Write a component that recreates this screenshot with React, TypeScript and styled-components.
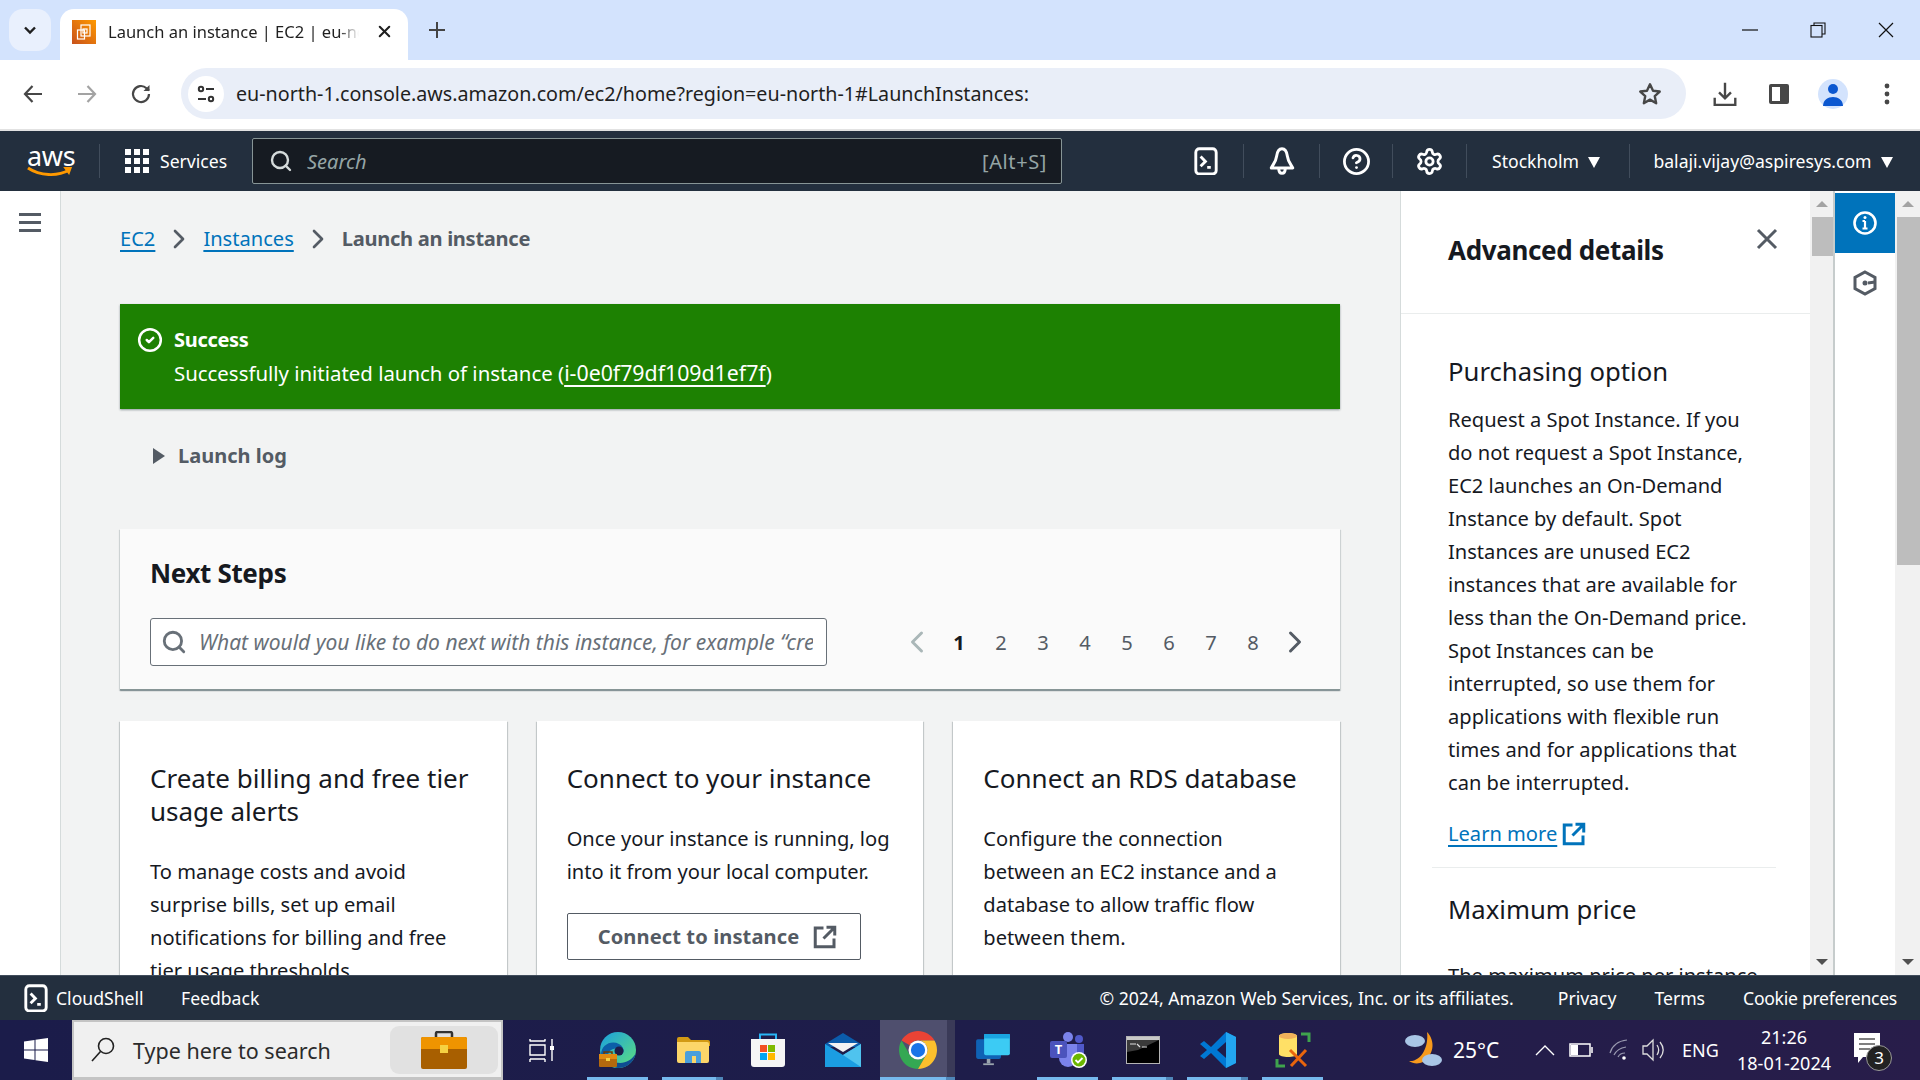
import React from "react";
import styled, { createGlobalStyle } from "styled-components";
import { ChevronLeft, ChevronRight, CircleCheck, CircleHelp, Search, Settings, X } from "lucide-react";

const FONT = `"Noto Sans", "Open Sans", sans-serif`;

const GlobalStyle = createGlobalStyle`
  html, body { margin: 0; padding: 0; background: #f2f3f3; }
  * { box-sizing: border-box; }
`;

const Screen = styled.div`
  width: 1920px;
  height: 1080px;
  display: flex;
  flex-direction: column;
  overflow: hidden;
  font-family: ${FONT};
  color: #16191f;
`;

/* browser chrome */
const TabStrip = styled.div`
  height: 60px;
  flex: none;
  display: flex;
  background: #d3e3fd;
  padding: 9px 0 0 9px;
`;
const TabSearch = styled.div`
  width: 42px;
  height: 42px;
  border-radius: 14px;
  background: #e9f0fd;
  display: flex;
  align-items: center;
  justify-content: center;
`;
const Tab = styled.div`
  width: 348px;
  height: 51px;
  margin-left: 9px;
  background: #fff;
  border-radius: 14px 14px 0 0;
  display: flex;
  align-items: center;
  padding: 0 12px 6px 12px;
`;
const Favicon = styled.div`
  width: 24px;
  height: 24px;
  flex: none;
  background: linear-gradient(45deg, #c8511b, #ff9900);
  display: flex;
  align-items: center;
  justify-content: center;
`;
const TabTitle = styled.div`
  width: 251px;
  margin-left: 12px;
  font-size: 16.5px;
  white-space: nowrap;
  overflow: hidden;
  color: #1f1f1f;
  -webkit-mask-image: linear-gradient(90deg, #000 92%, transparent);
  mask-image: linear-gradient(90deg, #000 92%, transparent);
`;
const TabClose = styled.div`
  margin-left: 16px;
  display: flex;
`;
const NewTab = styled.div`
  width: 42px;
  display: flex;
  align-items: center;
  justify-content: center;
  margin-left: 8px;
  padding-bottom: 9px;
`;
const WindowButtons = styled.div`
  margin-left: auto;
  display: flex;
  padding-bottom: 9px;
`;
const WinButton = styled.div`
  width: 68px;
  height: 42px;
  display: flex;
  align-items: center;
  justify-content: center;
`;
const Toolbar = styled.div`
  height: 71px;
  flex: none;
  background: #fff;
  border-bottom: 2px solid #e2e2e2;
  display: flex;
  align-items: center;
  padding: 0 0 2px 6px;
`;
const ToolIcon = styled.div`
  width: 54px;
  height: 42px;
  flex: none;
  display: flex;
  align-items: center;
  justify-content: center;
`;
const AddressBar = styled.div`
  width: 1505px;
  height: 51px;
  margin-left: 13px;
  margin-right: 12px;
  border-radius: 26px;
  background: #e9eef8;
  display: flex;
  align-items: center;
  padding: 0 23px 0 7px;
  flex: none;
`;
const SiteInfo = styled.div`
  width: 36px;
  height: 36px;
  border-radius: 50%;
  background: #fff;
  display: flex;
  align-items: center;
  justify-content: center;
  flex: none;
`;
const Url = styled.div`
  margin-left: 12px;
  font-size: 19.7px;
  color: #1f1f1f;
  flex: 1;
  white-space: nowrap;
`;
const Avatar = styled.div`
  width: 30px;
  height: 30px;
  border-radius: 50%;
  background: #d3e3fd;
  display: flex;
  align-items: center;
  justify-content: center;
`;

/* AWS nav */
const Nav = styled.div`
  height: 60px;
  flex: none;
  background: #232f3e;
  display: flex;
  align-items: center;
  color: #fff;
`;
const LogoCell = styled.div`
  width: 100px;
  height: 34px;
  border-right: 1px solid #414d5c;
  padding-left: 27px;
  display: flex;
  flex-direction: column;
  line-height: 1;
`;
const LogoText = styled.span`
  font-size: 27px;
  line-height: 24px;
  height: 22px;
  letter-spacing: -0.3px;
`;
const ServicesCell = styled.div`
  width: 152px;
  display: flex;
  align-items: center;
  padding-left: 25px;
  font-size: 17.6px;
  gap: 11px;
`;
const GridIcon = styled.div`
  display: grid;
  grid-template-columns: repeat(3, 6px);
  grid-auto-rows: 6px;
  gap: 3px;
  i {
    background: #fff;
    display: block;
  }
`;
const NavSearch = styled.div`
  width: 810px;
  height: 46px;
  background: #161b22;
  border: 1px solid #879596;
  border-radius: 2px;
  display: flex;
  align-items: center;
  padding: 0 14px 0 16px;
  color: #95a5a6;
  font-size: 20px;
`;
const NavSearchLabel = styled.span`
  font-style: italic;
  margin-left: 14px;
  flex: 1;
`;
const NavShortcut = styled.span`
  letter-spacing: 0.6px;
`;
const NavIcons = styled.div`
  margin-left: auto;
  display: flex;
  align-items: center;
`;
const NavCell = styled.div<{ $w: number; $line?: boolean }>`
  width: ${(p) => p.$w}px;
  height: 34px;
  flex: none;
  display: flex;
  align-items: center;
  justify-content: center;
  gap: 9px;
  font-size: 17.6px;
  border-left: ${(p) => (p.$line ? "1px solid #414d5c" : "none")};
`;
const NavTextCell = styled(NavCell)`
  padding-right: 4px;
`;
const Caret = styled.span`
  width: 0;
  height: 0;
  border-left: 6px solid transparent;
  border-right: 6px solid transparent;
  border-top: 11px solid #fff;
  margin-top: 2px;
`;

/* page */
const Main = styled.div`
  flex: 1;
  min-height: 0;
  display: flex;
  background: #f2f3f3;
  overflow: hidden;
`;
const SideRail = styled.div`
  width: 61px;
  flex: none;
  background: #fff;
  border-right: 1px solid #d5dbdb;
  padding: 22px 0 0 19px;
`;
const Burger = styled.div`
  width: 22px;
  display: flex;
  flex-direction: column;
  gap: 5px;
  i {
    height: 3px;
    background: #545b64;
    display: block;
  }
`;
const Content = styled.div`
  width: 1339px;
  flex: none;
  padding: 31px 60px 0 59px;
  overflow: hidden;
  font-size: 20.1px;
  line-height: 33px;
`;
const Crumbs = styled.div`
  display: flex;
  align-items: center;
  height: 33px;
`;
const Link = styled.a`
  color: #0073bb;
  text-decoration: underline;
  text-underline-offset: 4px;
`;
const CrumbSep = styled.span`
  width: 48px;
  display: flex;
  justify-content: center;
  color: #545b64;
`;
const CrumbNow = styled.span`
  color: #545b64;
  font-weight: 700;
  letter-spacing: -0.3px;
`;
const Flash = styled.div`
  margin-top: 49px;
  height: 105px;
  background: #1d8102;
  color: #fff;
  padding: 19px 0 0 17px;
  display: flex;
  gap: 11px;
  box-shadow: 0 1px 2px rgba(0, 28, 36, 0.4);
  font-size: 20.4px;
`;
const FlashIcon = styled.div`
  height: 33px;
  display: flex;
  align-items: center;
`;
const FlashTitle = styled.div`
  font-weight: 700;
  font-size: 20px;
  letter-spacing: -0.3px;
`;
const FlashLink = styled.a`
  color: #fff;
  font-size: 21.3px;
  text-decoration: underline;
  text-underline-offset: 4px;
`;
const Expander = styled.div`
  margin-top: 30px;
  padding-left: 33px;
  height: 33px;
  display: flex;
  align-items: center;
  gap: 13px;
  font-weight: 700;
  font-size: 20px;
  color: #545b64;
`;
const Triangle = styled.span`
  width: 0;
  height: 0;
  border-top: 8px solid transparent;
  border-bottom: 8px solid transparent;
  border-left: 12px solid #545b64;
`;
const NextSteps = styled.div`
  margin-top: 57px;
  height: 161px;
  background: #fafafa;
  padding: 28px 30px 0;
  border-bottom: 1px solid #879596;
  box-shadow: 0 1px 1px rgba(0, 28, 36, 0.3), 1px 1px 1px rgba(0, 28, 36, 0.1), -1px 1px 1px rgba(0, 28, 36, 0.1);
`;
const SectionTitle = styled.h2`
  margin: 0;
  font-size: 26px;
  line-height: 33px;
  font-weight: 700;
  letter-spacing: -0.35px;
`;
const StepsRow = styled.div`
  margin-top: 28px;
  display: flex;
  align-items: center;
`;
const InputWrap = styled.div`
  position: relative;
  width: 677px;
  height: 48px;
  flex: none;
  svg {
    position: absolute;
    left: 11px;
    top: 11px;
  }
`;
const StepsInput = styled.input`
  width: 100%;
  height: 100%;
  padding: 0 13px 0 48px;
  border: 1px solid #687078;
  border-radius: 3px;
  background: #fff;
  font-family: ${FONT};
  font-size: 21px;
  font-style: italic;
  &::placeholder {
    color: #687078;
    opacity: 1;
  }
`;
const Pager = styled.div`
  margin-left: 69px;
  display: flex;
`;
const PageItem = styled.div<{ $active?: boolean }>`
  width: 42px;
  height: 33px;
  display: flex;
  align-items: center;
  justify-content: center;
  color: ${(p) => (p.$active ? "#16191f" : "#545b64")};
  font-weight: ${(p) => (p.$active ? 700 : 400)};
`;
const CardRow = styled.div`
  margin-top: 31px;
  display: grid;
  grid-template-columns: repeat(3, 1fr);
  gap: 30px;
`;
const Card = styled.div`
  height: 400px;
  background: #fff;
  padding: 41px 30px 0;
  box-shadow: 0 1px 1px rgba(0, 28, 36, 0.3), 1px 1px 1px rgba(0, 28, 36, 0.15), -1px 1px 1px rgba(0, 28, 36, 0.15);
`;
const CardTitle = styled.h3`
  margin: 0;
  font-size: 26px;
  line-height: 33px;
  font-weight: 400;
  white-space: nowrap;
`;
const CardBody = styled.div`
  margin-top: 27px;
  white-space: nowrap;
`;
const OutlineButton = styled.div`
  margin-top: 25px;
  width: 294px;
  height: 47px;
  display: flex;
  align-items: center;
  padding-left: 30px;
  gap: 14px;
  border: 1px solid #545b64;
  border-radius: 2px;
  color: #545b64;
  font-weight: 700;
  letter-spacing: 0.1px;
  white-space: nowrap;
`;

/* help panel */
const Panel = styled.div`
  width: 410px;
  flex: none;
  background: #fff;
  border-left: 1px solid #d5dbdb;
  overflow: hidden;
  font-size: 20.1px;
  line-height: 33px;
`;
const PanelHead = styled.div`
  height: 123px;
  padding: 36px 31px 0 47px;
  border-bottom: 1px solid #eaeded;
  display: flex;
  justify-content: space-between;
  align-items: flex-start;
`;
const PanelTitle = styled.div`
  margin-top: 7px;
  font-size: 26px;
  line-height: 33px;
  font-weight: 700;
  letter-spacing: -0.35px;
`;
const PanelBody = styled.div`
  padding: 41px 0 0 47px;
  white-space: nowrap;
`;
const PanelHeading = styled.div`
  font-size: 25.7px;
  line-height: 33px;
`;
const PanelText = styled.div<{ $gap: number }>`
  margin-top: ${(p) => p.$gap}px;
`;
const LearnMore = styled.div`
  margin-top: 18px;
  display: flex;
  align-items: center;
  gap: 5px;
`;
const PanelRule = styled.div`
  width: 344px;
  height: 1px;
  margin: 17px 0 25px -16px;
  background: #eaeded;
`;
const ScrollTrack = styled.div<{ $w: number }>`
  width: ${(p) => p.$w}px;
  flex: none;
  background: #f1f1f1;
  display: flex;
  flex-direction: column;
  align-items: flex-end;
`;
const ScrollUp = styled.div`
  width: 100%;
  height: 26px;
  display: flex;
  align-items: center;
  justify-content: center;
  &::after {
    content: "";
    border-left: 6px solid transparent;
    border-right: 6px solid transparent;
    border-bottom: 6px solid #a3a3a3;
  }
`;
const ScrollDown = styled.div`
  width: 100%;
  height: 26px;
  margin-top: auto;
  display: flex;
  align-items: center;
  justify-content: center;
  &::after {
    content: "";
    border-left: 6px solid transparent;
    border-right: 6px solid transparent;
    border-top: 6px solid #505050;
  }
`;
const ScrollThumb = styled.div<{ $h: number; $w: number }>`
  width: ${(p) => p.$w}px;
  height: ${(p) => p.$h}px;
  background: #bdbdbd;
`;
const ToolRail = styled.div`
  width: 62px;
  flex: none;
  background: #fff;
  border-left: 2px solid #c6cccc;
  padding-top: 2px;
`;
const RailButton = styled.div<{ $active?: boolean }>`
  width: 60px;
  height: 60px;
  display: flex;
  align-items: center;
  justify-content: center;
  background: ${(p) => (p.$active ? "#0073bb" : "transparent")};
`;

/* AWS footer */
const Footer = styled.div`
  height: 45px;
  flex: none;
  background: #232f3e;
  border-top: 1px solid #414d5c;
  color: #fff;
  display: flex;
  align-items: center;
  padding: 0 23px 0 24px;
  font-size: 17.6px;
`;
const FooterShell = styled.div`
  display: flex;
  align-items: center;
  gap: 8px;
  width: 157px;
`;
const FooterEnd = styled.div`
  margin-left: auto;
  display: flex;
  gap: 38px;
  span:first-child {
    margin-right: 6px;
  }
  span:last-child {
    letter-spacing: -0.28px;
  }
`;

/* windows taskbar */
const Taskbar = styled.div`
  height: 60px;
  flex: none;
  display: flex;
  color: #fff;
  background: linear-gradient(90deg, #1b1c4a, #1e1d4a 50%, #281d4a);
`;
const StartCell = styled.div`
  width: 72px;
  display: flex;
  align-items: center;
  justify-content: center;
  flex: none;
`;
const WinSearch = styled.div`
  width: 431px;
  flex: none;
  background: #f0f0f0;
  border: 2px solid #c4c4c4;
  border-bottom-width: 3px;
  display: flex;
  align-items: center;
  padding: 0 3px 0 17px;
  color: #2b2b2b;
  font-size: 21.5px;
`;
const WinSearchText = styled.span`
  margin-left: 18px;
  padding-top: 2px;
  flex: 1;
`;
const HighlightPill = styled.div`
  width: 108px;
  height: 48px;
  border-radius: 9px;
  background: #e1e1e1;
  display: flex;
  align-items: center;
  justify-content: center;
`;
const TaskView = styled.div`
  width: 77px;
  flex: none;
  display: flex;
  align-items: center;
  justify-content: center;
`;
const TaskCell = styled.div<{ $open?: boolean; $active?: boolean; $stack?: boolean }>`
  width: 75px;
  flex: none;
  position: relative;
  display: flex;
  align-items: center;
  justify-content: center;
  background: ${(p) => (p.$active ? "linear-gradient(90deg, #4f4f6e 90%, #3a3a58 90%)" : "transparent")};
  &::after {
    content: "";
    position: absolute;
    bottom: 0;
    height: 3px;
    left: ${(p) => (p.$active ? 0 : "7px")};
    right: ${(p) => (p.$active ? 0 : "7px")};
    background: ${(p) =>
      !p.$open ? "transparent" : p.$stack ? "linear-gradient(90deg, #76b9ed 88%, #4f86b8 88%)" : "#76b9ed"};
  }
`;
const Tray = styled.div`
  margin-left: auto;
  display: flex;
  align-items: center;
  padding-right: 40px;
`;
const TempText = styled.span`
  margin-left: 10px;
  width: 82px;
  font-size: 21px;
`;
const TrayIcon = styled.div<{ $w: number }>`
  width: ${(p) => p.$w}px;
  display: flex;
  justify-content: center;
`;
const Lang = styled.span`
  font-size: 18px;
  width: 34px;
  margin-left: 7px;
`;
const Clock = styled.div`
  width: 112px;
  margin-left: 12px;
  font-size: 18px;
  line-height: 26px;
  text-align: center;
`;
const NoteWrap = styled.div`
  position: relative;
  margin-left: 14px;
  height: 34px;
`;
const NoteBadge = styled.span`
  position: absolute;
  left: 12px;
  top: 12px;
  width: 26px;
  height: 26px;
  border-radius: 50%;
  background: #222;
  border: 1px solid #999;
  font-size: 17px;
  line-height: 24px;
  text-align: center;
`;

const ExternalIcon = ({ color, size = 24 }: { color: string; size?: number }) => (
  <svg width={size} height={size} viewBox="0 0 16 16" fill="none" stroke={color} strokeWidth="2">
    <path d="M7 2H1.500v12.500H14V9M9 1.500h5.500V7M14 2L7 9" />
  </svg>
);

const ShellIcon = ({ size = 24 }: { size?: number }) => (
  <svg width={size} height={size * 1.2} viewBox="0 0 20 24" fill="none" stroke="#fff" strokeWidth="2.400">
    <rect x="1.500" y="1.500" width="17" height="21" rx="3" />
    <path d="M5.500 8l4 4-4 4M11 17h3" />
  </svg>
);

const BellIcon = () => (
  <svg width="28" height="30" viewBox="0 0 26 28" fill="none" stroke="#fff" strokeWidth="2.800" strokeLinejoin="round">
    <path d="M13 2.500c3.500 0 4.500 3 5 7 .5 5 3.500 8 5 11H3c1.500-3 4.500-6 5-11 .5-4 1.500-7 5-7z" />
    <path d="M10 21c0 6 6 6 6 0" />
  </svg>
);

const Edge = () => (
  <svg width="38" height="38" viewBox="0 0 38 38">
    <defs>
      <linearGradient id="edgeA" x1="0" y1="0" x2="1" y2="1">
        <stop offset="0" stopColor="#1a9fe0" />
        <stop offset="1" stopColor="#5fe07c" />
      </linearGradient>
    </defs>
    <circle cx="19" cy="19" r="18" fill="url(#edgeA)" />
    <path d="M2 24C2 14 12 9 20 13c7 4 5 11 1 11-3 0-4-4-1-6-6-2-12 2-11 9 1 6 7 10 13 10C12 37 3 32 2 24z" fill="#0c5fa8" />
    <path d="M12 30c10 4 19 2 25-8-2 9-9 15-18 15-3 0-5-3-7-7z" fill="#0e4d92" />
    <circle cx="20" cy="20" r="4.500" fill="#1e1d4a" />
    <rect x="0" y="23" width="18" height="13" rx="1" fill="#b4690e" />
    <rect x="0" y="23" width="18" height="5" fill="#e08a12" />
    <rect x="7" y="27" width="4" height="3" fill="#f5d142" />
    <path d="M5 23v-2h8v2" stroke="#6a3d08" strokeWidth="1.500" fill="none" />
  </svg>
);

const Explorer = () => (
  <svg width="34" height="28" viewBox="0 0 34 28">
    <path d="M1 3a2 2 0 012-2h9l3 3h17a2 2 0 012 2v4H1z" fill="#d29a14" />
    <path d="M1 6h30a2 2 0 012 2v17a2 2 0 01-2 2H3a2 2 0 01-2-2z" fill="#fcd669" />
    <path d="M6 27V17a2 2 0 012-2h12a2 2 0 012 2v10h-5v-7h-4v7z" fill="#4a9fdc" transform="translate(3 0)" />
  </svg>
);

const Store = () => (
  <svg width="36" height="36" viewBox="0 0 36 36">
    <path d="M10 8V2.500h16V8" fill="none" stroke="#29b6f6" strokeWidth="2" />
    <path d="M1 7h34v25a3 3 0 01-3 3H4a3 3 0 01-3-3z" fill="#f5f5f5" />
    <rect x="10" y="13" width="7" height="7" fill="#f25022" />
    <rect x="18" y="13" width="7" height="7" fill="#7fba00" />
    <rect x="10" y="21" width="7" height="7" fill="#00a4ef" />
    <rect x="18" y="21" width="7" height="7" fill="#ffb900" />
  </svg>
);

const Mail = () => (
  <svg width="36" height="34" viewBox="0 0 36 34">
    <path d="M0 11L18 0l18 11v3H0z" fill="#0b5cab" />
    <path d="M3 10h30L18 19z" fill="#f2f2f2" />
    <path d="M0 11l18 11 18-11v23H0z" fill="#1b9de2" />
    <path d="M18 22l18-11v23z" fill="#4fc3ee" />
  </svg>
);

const Chrome = () => (
  <svg width="38" height="38" viewBox="4 4 40 40">
    <path d="M6.680 14A20 20 0 0141.320 14H24A10 10 0 0015.340 19z" fill="#ea4335" />
    <path d="M6.680 14A20 20 0 0024 44l8.660-15A10 10 0 0115.340 29z" fill="#34a853" />
    <path d="M41.320 14A20 20 0 0124 44l8.660-15A10 10 0 0024 14z" fill="#fbc02d" />
    <circle cx="24" cy="24" r="10" fill="#fff" />
    <circle cx="24" cy="24" r="7.500" fill="#1a73e8" />
  </svg>
);

const Remote = () => (
  <svg width="34" height="32" viewBox="0 0 38 36">
    <rect x="0" y="6" width="28" height="22" rx="2" fill="#0f62b5" />
    <rect x="9" y="0" width="29" height="24" rx="2" fill="#3ccbf4" />
    <rect x="9" y="0" width="29" height="5" fill="#1aa4e0" />
    <rect x="12" y="28" width="4" height="5" fill="#9aa4ad" />
    <rect x="8" y="33" width="12" height="2" fill="#9aa4ad" />
  </svg>
);

const Teams = () => (
  <svg width="38" height="36" viewBox="0 0 38 36">
    <circle cx="19" cy="5" r="5" fill="#7b83eb" />
    <circle cx="30" cy="7" r="4" fill="#5059c9" />
    <path d="M24 12h11v12a6 6 0 01-11 2z" fill="#5059c9" />
    <path d="M10 12h18v14a8 8 0 01-18 0z" fill="#7b83eb" />
    <rect x="1" y="9" width="17" height="17" rx="2" fill="#4b53bc" />
    <text x="9.500" y="22" fontSize="13" fontWeight="700" fill="#fff" textAnchor="middle" fontFamily="Noto Sans">
      T
    </text>
    <circle cx="30" cy="28" r="8" fill="#fff" />
    <circle cx="30" cy="28" r="6.500" fill="#6bb700" />
    <path d="M26.500 28l2.500 2.500 4.500-4.500" stroke="#fff" strokeWidth="1.800" fill="none" />
  </svg>
);

const Cmd = () => (
  <svg width="34" height="28" viewBox="0 0 34 28">
    <rect x="0.500" y="0.500" width="33" height="27" fill="#000" stroke="#b5b5b5" />
    <rect x="1" y="1" width="32" height="3" fill="#c9c9c9" />
    <path d="M1 4h32L12 14 1 16z" fill="#3a3a3a" />
    <path d="M4 8h6M11 8l3 3M16 11h5" stroke="#ddd" strokeWidth="1.200" />
  </svg>
);

const VsCode = () => (
  <svg width="36" height="36" viewBox="0 0 36 36">
    <path d="M26 0l10 5v26l-10 5L11 21l-7 6-4-3 7-6-7-6 4-3 7 6z" fill="#0078d4" />
    <path d="M26 0l10 5v26l-10 5z" fill="#23a6f0" />
    <path d="M26 10l-9 8 9 8z" fill="#1e1d4a" />
  </svg>
);

const ToolsIcon = () => (
  <svg width="36" height="36" viewBox="0 0 36 36" fill="none">
    <path d="M26 2h8v8M10 34H2v-7" stroke="#3fa34d" strokeWidth="3" />
    <path d="M4 4c0-4 18-4 18 0v18c0 4-18 4-18 0z" fill="#ffe066" />
    <ellipse cx="13" cy="4" rx="9" ry="3" fill="#f2b15a" />
    <path d="M15 18l16 16M31 18L16 34" stroke="#e8650d" strokeWidth="3" />
  </svg>
);

const Weather = () => (
  <svg width="38" height="40" viewBox="0 0 38 40">
    <path d="M22 2c8 8 8 22-4 30-4 2-10 2-14-1 12 1 20-14 18-29z" fill="#f79a1c" />
    <ellipse cx="10" cy="11" rx="10" ry="6" fill="#a9c6e6" />
    <ellipse cx="27" cy="30" rx="10" ry="6" fill="#a9c6e6" />
  </svg>
);

const PURCHASING = [
  "Request a Spot Instance. If you",
  "do not request a Spot Instance,",
  "EC2 launches an On-Demand",
  "Instance by default. Spot",
  "Instances are unused EC2",
  "instances that are available for",
  "less than the On-Demand price.",
  "Spot Instances can be",
  "interrupted, so use them for",
  "applications with flexible run",
  "times and for applications that",
  "can be interrupted.",
];

const PAGES = [1, 2, 3, 4, 5, 6, 7, 8];

function Lines({ items }: { items: string[] }) {
  return (
    <>
      {items.map((t) => (
        <div key={t}>{t}</div>
      ))}
    </>
  );
}

export default function App() {
  return (
    <Screen>
      <GlobalStyle />
      <TabStrip>
        <TabSearch>
          <svg width="16" height="16" viewBox="0 0 16 16" fill="none" stroke="#1f1f1f" strokeWidth="2.400">
            <path d="M3 5.500l5 5 5-5" />
          </svg>
        </TabSearch>
        <Tab>
          <Favicon>
            <svg width="18" height="18" viewBox="0 0 18 18" fill="none" stroke="#fff" strokeWidth="1.200">
              <rect x="6" y="2" width="9" height="11" />
              <rect x="2.500" y="7" width="7" height="9" />
              <rect x="8" y="6" width="4" height="4" />
            </svg>
          </Favicon>
          <TabTitle>Launch an instance | EC2 | eu-north-1</TabTitle>
          <TabClose>
            <X size={19} strokeWidth={2.600} color="#1f1f1f" />
          </TabClose>
        </Tab>
        <NewTab>
          <svg width="18" height="18" viewBox="0 0 18 18" stroke="#444" strokeWidth="2">
            <path d="M9 1v16M1 9h16" />
          </svg>
        </NewTab>
        <WindowButtons>
          <WinButton>
            <svg width="16" height="2" viewBox="0 0 16 2">
              <path d="M0 1h16" stroke="#111" strokeWidth="1.200" />
            </svg>
          </WinButton>
          <WinButton>
            <svg width="16" height="16" viewBox="0 0 16 16" fill="none" stroke="#111" strokeWidth="1.100">
              <rect x="1" y="3.500" width="11" height="11.500" />
              <path d="M4 3.500V1h11v11h-3" />
            </svg>
          </WinButton>
          <WinButton>
            <svg width="16" height="16" viewBox="0 0 16 16" stroke="#111" strokeWidth="1.200">
              <path d="M1 1l14 14M15 1L1 15" />
            </svg>
          </WinButton>
        </WindowButtons>
      </TabStrip>

      <Toolbar>
        <ToolIcon>
          <svg width="22" height="22" viewBox="0 0 22 22" fill="none" stroke="#474747" strokeWidth="2.200">
            <path d="M20 11H3M10.500 3L3 11l7.500 8" />
          </svg>
        </ToolIcon>
        <ToolIcon>
          <svg width="22" height="22" viewBox="0 0 22 22" fill="none" stroke="#a3a3a3" strokeWidth="2.200">
            <path d="M2 11h17M11.500 3L19 11l-7.500 8" />
          </svg>
        </ToolIcon>
        <ToolIcon>
          <svg width="24" height="24" viewBox="0 0 24 24" fill="none" stroke="#474747" strokeWidth="2.200">
            <path d="M20 12a8 8 0 11-2.500-5.800L20 8.500" />
            <path d="M20.500 3v6h-6z" fill="#474747" stroke="none" />
          </svg>
        </ToolIcon>
        <AddressBar>
          <SiteInfo>
            <svg width="20" height="20" viewBox="0 0 20 20" fill="none" stroke="#333" strokeWidth="2">
              <circle cx="5" cy="5" r="2.200" />
              <path d="M10 5h8M2 15h8" />
              <circle cx="15" cy="15" r="2.200" />
            </svg>
          </SiteInfo>
          <Url>eu-north-1.console.aws.amazon.com/ec2/home?region=eu-north-1#LaunchInstances:</Url>
          <svg width="26" height="26" viewBox="0 0 24 24" fill="none" stroke="#474747" strokeWidth="2.200" strokeLinejoin="round">
            <path d="M12 3l2.800 6 6.200.7-4.600 4.300 1.300 6.500-5.700-3.300-5.700 3.300L7.600 14 3 9.700 9.200 9z" />
          </svg>
        </AddressBar>
        <ToolIcon>
          <svg width="26" height="26" viewBox="0 0 24 24" fill="none" stroke="#474747" strokeWidth="2.200">
            <path d="M12 1.500V16M6.500 10.500L12 16l5.500-5.500M2.500 15.500V22h19v-6.500" />
          </svg>
        </ToolIcon>
        <ToolIcon>
          <svg width="24" height="24" viewBox="0 0 24 24">
            <rect x="2" y="2" width="20" height="20" rx="2" fill="#474747" />
            <rect x="5" y="5" width="8" height="14" fill="#fff" />
          </svg>
        </ToolIcon>
        <ToolIcon>
          <Avatar>
            <svg width="20" height="24" viewBox="0 0 20 24" fill="#0b57d0">
              <circle cx="10" cy="7" r="5" />
              <path d="M0 24c0-12 20-12 20 0z" />
            </svg>
          </Avatar>
        </ToolIcon>
        <ToolIcon>
          <svg width="6" height="24" viewBox="0 0 6 24" fill="#474747">
            <circle cx="3" cy="4" r="2.400" />
            <circle cx="3" cy="12" r="2.400" />
            <circle cx="3" cy="20" r="2.400" />
          </svg>
        </ToolIcon>
      </Toolbar>

      <Nav>
        <LogoCell>
          <LogoText>aws</LogoText>
          <svg width="47" height="12" viewBox="0 0 48 12" fill="none">
            <path d="M1 2c12 8 30 9 42 2" stroke="#ff9900" strokeWidth="3" />
            <path d="M37 1l9 0-3 8z" fill="#ff9900" />
          </svg>
        </LogoCell>
        <ServicesCell>
          <GridIcon>
            {Array.from({ length: 9 }).map((_, i) => (
              <i key={i} />
            ))}
          </GridIcon>
          Services
        </ServicesCell>
        <NavSearch>
          <Search size={24} strokeWidth={2.400} color="#d5dbdb" />
          <NavSearchLabel>Search</NavSearchLabel>
          <NavShortcut>[Alt+S]</NavShortcut>
        </NavSearch>
        <NavIcons>
          <NavCell $w={74}>
            <ShellIcon />
          </NavCell>
          <NavCell $w={76} $line>
            <BellIcon />
          </NavCell>
          <NavCell $w={73} $line>
            <CircleHelp size={29} strokeWidth={2.300} />
          </NavCell>
          <NavCell $w={74} $line>
            <Settings size={29} strokeWidth={2.300} />
          </NavCell>
          <NavTextCell $w={163} $line>
            Stockholm <Caret />
          </NavTextCell>
          <NavTextCell $w={291} $line>
            balaji.vijay@aspiresys.com <Caret />
          </NavTextCell>
        </NavIcons>
      </Nav>

      <Main>
        <SideRail>
          <Burger>
            <i />
            <i />
            <i />
          </Burger>
        </SideRail>
        <Content>
          <Crumbs>
            <Link>EC2</Link>
            <CrumbSep>
              <ChevronRight size={32} strokeWidth={2} />
            </CrumbSep>
            <Link>Instances</Link>
            <CrumbSep>
              <ChevronRight size={32} strokeWidth={2} />
            </CrumbSep>
            <CrumbNow>Launch an instance</CrumbNow>
          </Crumbs>
          <Flash>
            <FlashIcon>
              <CircleCheck size={26} strokeWidth={2.300} />
            </FlashIcon>
            <div>
              <FlashTitle>Success</FlashTitle>
              <div>
                Successfully initiated launch of instance (<FlashLink>i-0e0f79df109d1ef7f</FlashLink>)
              </div>
            </div>
          </Flash>
          <Expander>
            <Triangle />
            Launch log
          </Expander>
          <NextSteps>
            <SectionTitle>Next Steps</SectionTitle>
            <StepsRow>
              <InputWrap>
                <Search size={26} strokeWidth={2.600} color="#687078" />
                <StepsInput placeholder="What would you like to do next with this instance, for example “create a billing alarm”" />
              </InputWrap>
              <Pager>
                <PageItem>
                  <ChevronLeft size={36} strokeWidth={2} color="#aab7b8" />
                </PageItem>
                {PAGES.map((n) => (
                  <PageItem key={n} $active={n === 1}>
                    {n}
                  </PageItem>
                ))}
                <PageItem>
                  <ChevronRight size={36} strokeWidth={2} color="#545b64" />
                </PageItem>
              </Pager>
            </StepsRow>
          </NextSteps>
          <CardRow>
            <Card>
              <CardTitle>
                Create billing and free tier
                <br />
                usage alerts
              </CardTitle>
              <CardBody>
                <Lines
                  items={[
                    "To manage costs and avoid",
                    "surprise bills, set up email",
                    "notifications for billing and free",
                    "tier usage thresholds",
                  ]}
                />
              </CardBody>
            </Card>
            <Card>
              <CardTitle>Connect to your instance</CardTitle>
              <CardBody>
                <Lines items={["Once your instance is running, log", "into it from your local computer."]} />
              </CardBody>
              <OutlineButton>
                Connect to instance
                <ExternalIcon color="#545b64" />
              </OutlineButton>
            </Card>
            <Card>
              <CardTitle>Connect an RDS database</CardTitle>
              <CardBody>
                <Lines
                  items={[
                    "Configure the connection",
                    "between an EC2 instance and a",
                    "database to allow traffic flow",
                    "between them.",
                  ]}
                />
              </CardBody>
            </Card>
          </CardRow>
        </Content>

        <Panel>
          <PanelHead>
            <PanelTitle>Advanced details</PanelTitle>
            <svg width="24" height="24" viewBox="0 0 24 24" stroke="#545b64" strokeWidth="3">
              <path d="M3 3l18 18M21 3L3 21" />
            </svg>
          </PanelHead>
          <PanelBody>
            <PanelHeading>Purchasing option</PanelHeading>
            <PanelText $gap={15}>
              <Lines items={PURCHASING} />
            </PanelText>
            <LearnMore>
              <Link>Learn more</Link>
              <ExternalIcon color="#0073bb" />
            </LearnMore>
            <PanelRule />
            <PanelHeading>Maximum price</PanelHeading>
            <PanelText $gap={33}>The maximum price per instance</PanelText>
          </PanelBody>
        </Panel>
        <ScrollTrack $w={23}>
          <ScrollUp />
          <ScrollThumb $w={21} $h={39} />
          <ScrollDown />
        </ScrollTrack>
        <ToolRail>
          <RailButton $active>
            <svg width="26" height="26" viewBox="0 0 26 26" fill="none" stroke="#fff" strokeWidth="2.600">
              <circle cx="13" cy="13" r="10.500" />
              <path d="M13 11v7M10.500 18.500h5M10.500 11H13" strokeWidth="2.200" />
              <circle cx="13" cy="7.500" r="1.500" fill="#fff" stroke="none" />
            </svg>
          </RailButton>
          <RailButton>
            <svg width="24" height="26" viewBox="0 0 24 26" fill="none" stroke="#545b64" strokeWidth="3">
              <path d="M12 2l10 5.500v11L12 24 2 18.500v-11z" />
              <path d="M22 12l-7 1" />
              <circle cx="12" cy="13" r="2.500" fill="#545b64" stroke="none" />
            </svg>
          </RailButton>
        </ToolRail>
        <ScrollTrack $w={25}>
          <ScrollUp />
          <ScrollThumb $w={23} $h={348} />
          <ScrollDown />
        </ScrollTrack>
      </Main>

      <Footer>
        <FooterShell>
          <ShellIcon />
          CloudShell
        </FooterShell>
        Feedback
        <FooterEnd>
          <span>© 2024, Amazon Web Services, Inc. or its affiliates.</span>
          <span>Privacy</span>
          <span>Terms</span>
          <span>Cookie preferences</span>
        </FooterEnd>
      </Footer>

      <Taskbar>
        <StartCell>
          <svg width="24" height="24" viewBox="0 0 24 24" fill="#fff">
            <path d="M0 3.500l10.500-1.500v9.500H0zM11.500 1.800L24 0v11.500H11.500zM0 12.500h10.500V22L0 20.500zM11.500 12.500H24V24l-12.500-1.800z" />
          </svg>
        </StartCell>
        <WinSearch>
          <svg width="24" height="26" viewBox="0 0 24 26" fill="none" stroke="#222" strokeWidth="1.600">
            <circle cx="15" cy="9" r="7.500" />
            <path d="M9.500 14.500L1 24" />
          </svg>
          <WinSearchText>Type here to search</WinSearchText>
          <HighlightPill>
            <svg width="46" height="38" viewBox="0 0 46 38">
              <path d="M15 6V2.500a1.500 1.500 0 011.500-1.500h13A1.500 1.500 0 0131 2.500V6" fill="none" stroke="#333" strokeWidth="2.500" />
              <rect x="0" y="6" width="46" height="32" rx="2" fill="#a85f00" />
              <path d="M0 8a2 2 0 012-2h42a2 2 0 012 2v10H0z" fill="#ef9400" />
              <rect x="19" y="14" width="8" height="8" fill="#f5d142" />
            </svg>
          </HighlightPill>
        </WinSearch>
        <TaskView>
          <svg width="26" height="24" viewBox="0 0 26 24" fill="none" stroke="#fff" strokeWidth="1.400">
            <path d="M1 3.500V1M16 3.500V1M1 3h15M1 7h15v10H1zM1 21h15M1 21v3M16 21v3M23 1v22" />
            <rect x="21" y="8" width="4" height="4" fill="#fff" stroke="none" />
          </svg>
        </TaskView>
        <TaskCell $open>
          <Edge />
        </TaskCell>
        <TaskCell $open $stack>
          <Explorer />
        </TaskCell>
        <TaskCell>
          <Store />
        </TaskCell>
        <TaskCell>
          <Mail />
        </TaskCell>
        <TaskCell $open $active $stack>
          <Chrome />
        </TaskCell>
        <TaskCell>
          <Remote />
        </TaskCell>
        <TaskCell $open>
          <Teams />
        </TaskCell>
        <TaskCell $open $stack>
          <Cmd />
        </TaskCell>
        <TaskCell $open $stack>
          <VsCode />
        </TaskCell>
        <TaskCell $open>
          <ToolsIcon />
        </TaskCell>
        <Tray>
          <Weather />
          <TempText>25°C</TempText>
          <TrayIcon $w={20}>
            <svg width="20" height="12" viewBox="0 0 20 12" fill="none" stroke="#fff" strokeWidth="1.400">
              <path d="M1 11l9-9 9 9" />
            </svg>
          </TrayIcon>
          <TrayIcon $w={52}>
            <svg width="24" height="14" viewBox="0 0 24 14" fill="none" stroke="#fff" strokeWidth="1.500">
              <rect x="1" y="1" width="20" height="12" />
              <rect x="2" y="2" width="7" height="10" fill="#fff" stroke="none" />
              <path d="M23 4v6" />
            </svg>
          </TrayIcon>
          <TrayIcon $w={24}>
            <svg width="20" height="22" viewBox="0 0 20 22" fill="none" stroke="#9a9ab0" strokeWidth="1.200">
              <path d="M1 14C3 7 9 2 18 1M5 16c2-4 5-7 12-8M9 18c1-2 3-4 7-4" />
              <circle cx="15" cy="19" r="1.800" fill="#fff" stroke="none" />
            </svg>
          </TrayIcon>
          <TrayIcon $w={44}>
            <svg width="22" height="24" viewBox="0 0 22 24" fill="none" stroke="#ddd" strokeWidth="1.300">
              <path d="M1 8h4l6-6v20l-6-6H1zM15 7c2 3 2 7 0 10M18 4c4 5 4 11 0 16" />
            </svg>
          </TrayIcon>
          <Lang>ENG</Lang>
          <Clock>
            21:26
            <br />
            18-01-2024
          </Clock>
          <NoteWrap>
            <svg width="26" height="32" viewBox="0 0 26 32" fill="#fff">
              <path d="M0 0h26v24H9l-5 6v-6H0z" />
              <path d="M5 6h16M5 11h16M5 16h11" stroke="#555" strokeWidth="1.500" />
            </svg>
            <NoteBadge>3</NoteBadge>
          </NoteWrap>
        </Tray>
      </Taskbar>
    </Screen>
  );
}
